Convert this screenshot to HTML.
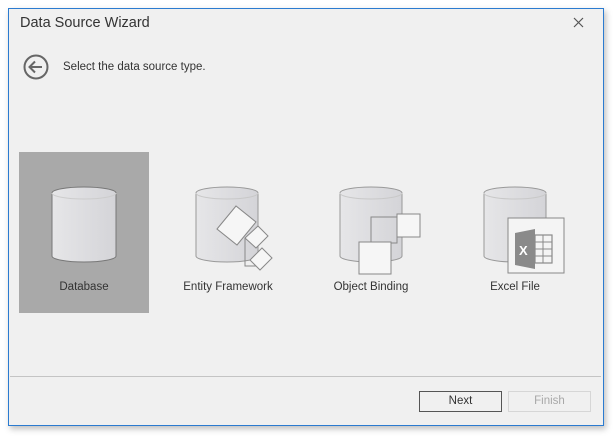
<!DOCTYPE html>
<html><head><style>
body{margin:0;width:616px;height:438px;background:#fff;font-family:"Liberation Sans",Tahoma,sans-serif;position:relative;overflow:hidden}
.win{position:absolute;left:8px;top:8px;width:594px;height:416px;background:#f0f0f0;border:1px solid #2b7bd0;box-shadow:2px 3px 6px rgba(0,0,0,.25)}
.t{position:absolute;font-size:11.5px;color:#333}
.btn{position:absolute;top:391px;height:21px;width:80px;box-sizing:border-box;font-size:11.5px;text-align:center;line-height:19px}
</style></head><body>
<div class="win"></div>
<div class="t" style="left:20px;top:15px;font-size:14.5px;color:#333">Data Source Wizard</div>
<svg style="position:absolute;left:0;top:0" width="616" height="438">
<path d="M574 18l9 9M583 18l-9 9" stroke="#555" stroke-width="1.2"/>
<circle cx="36" cy="67" r="11.5" fill="none" stroke="#666" stroke-width="2"/>
<path d="M42 67H30M35 61.5L29.5 67L35 72.5" fill="none" stroke="#666" stroke-width="2"/>
<rect x="19" y="152" width="130" height="161" fill="#a9a9a9"/>
<line x1="10" y1="376.5" x2="601" y2="376.5" stroke="#c4c4c4"/>
<defs><linearGradient id="g" x1="0" x2="1"><stop offset="0" stop-color="#e6e6e8"/><stop offset="1" stop-color="#d4d4d8"/></linearGradient></defs>
<g fill="url(#g)" stroke="#777" stroke-width="1">
<path d="M52 193v63a32 6 0 0 0 64 0v-63a32 6 0 0 0-64 0z"/>
<path d="M196 193v63a31 6 0 0 0 62 0v-63a31 6 0 0 0-62 0z" stroke="#999"/>
<path d="M340 193v63a31 6 0 0 0 62 0v-63a31 6 0 0 0-62 0z" stroke="#999"/>
<path d="M484 193v63a31 6 0 0 0 62 0v-63a31 6 0 0 0-62 0z" stroke="#999"/>
</g>
<path d="M52 193a32 6 0 0 0 64 0" fill="none" stroke="#ccc"/>
<path d="M196 193a31 6 0 0 0 62 0M340 193a31 6 0 0 0 62 0M484 193a31 6 0 0 0 62 0" fill="none" stroke="#c8c8c8"/>
<g fill="#f6f6f6" stroke="#888">
<path d="M245 238v28h13" fill="none"/>
<path d="M217 229l19-23l20 16l-19 23z"/>
<path d="M245 238l13-12l10 10l-12 12z"/>
<path d="M250 260l12-12l10 10l-12 12z"/>
<path d="M371 243v-26h26v26z" fill="none"/>
<rect x="397" y="214" width="23" height="23"/>
<rect x="359" y="242" width="32" height="32"/>
<rect x="508" y="218" width="56" height="55" fill="#f4f4f4"/>
</g>
<path d="M515 233l20-4v40l-20-4z" fill="#8a8a8a"/>
<rect x="535" y="235" width="17" height="28" fill="none" stroke="#8a8a8a" stroke-width="1.2"/>
<path d="M535 242h17M535 249h17M535 256h17M543 235v28" stroke="#8a8a8a"/>
<text x="519" y="255" fill="#fff" font-size="13" font-weight="bold" font-family="Liberation Sans">X</text>
</svg>
<div class="t" style="left:63px;top:61px">Select the data source type.</div>
<div class="t" style="left:19px;width:130px;text-align:center;top:281px">Database</div>
<div class="t" style="left:163px;width:130px;text-align:center;top:281px">Entity Framework</div>
<div class="t" style="left:306px;width:130px;text-align:center;top:281px">Object Binding</div>
<div class="t" style="left:450px;width:130px;text-align:center;top:281px">Excel File</div>
<div class="btn" style="left:419px;width:83px;border:1px solid #555;color:#333">Next</div>
<div class="btn" style="left:508px;width:83px;border:1px solid #d6d6d6;color:#a8a8a8">Finish</div>
</body></html>
